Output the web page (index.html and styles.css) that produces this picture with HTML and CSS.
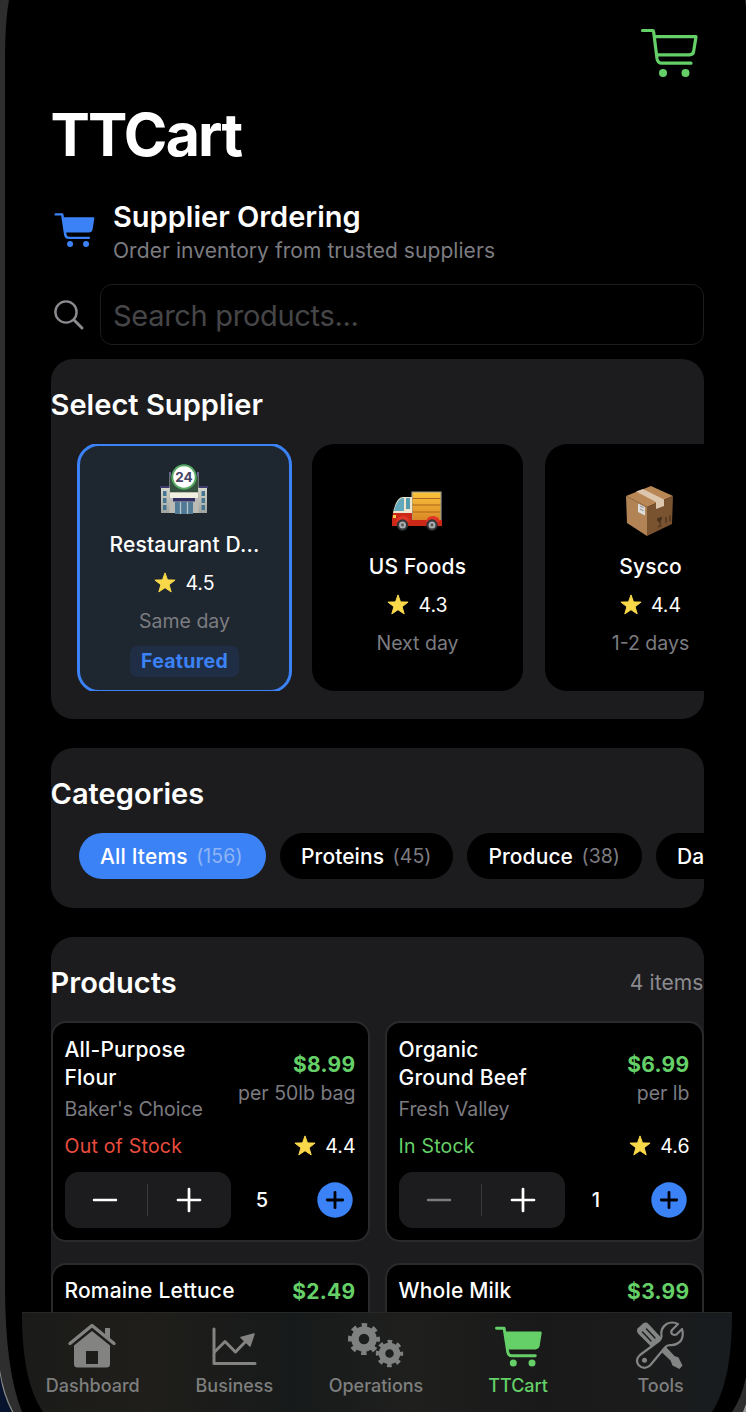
FILE: index.html
```html
<!DOCTYPE html>
<html lang="en">
<head>
<meta charset="utf-8">
<title>TTCart</title>
<link rel="stylesheet" href="styles.css">
</head>
<body>
<svg class="defs" width="0" height="0" aria-hidden="true">
  <defs>
    <symbol id="star" viewBox="0 0 22 22"><path d="M11 .9l2.500 7 7.600.2-6 4.600 2.100 7.200-6.200-4.200-6.200 4.200 2.100-7.200-6-4.600 7.600-.2z" fill="#f9d84a" stroke="#f9d84a" stroke-width="1" stroke-linejoin="round"/></symbol>
    <symbol id="cart-fill" viewBox="0 0 48 42">
      <path d="M2 3.300h7.600l3.600 23.600q.6 3.900 4.200 3.900h23.400" fill="none" stroke="currentColor" stroke-width="2.900" stroke-linecap="round" stroke-linejoin="round"/>
      <path d="M10.600 6.600H46q1.400 0 1.200 1.400l-2 12.600q-.6 3.800-4.400 3.800H13.300z" fill="currentColor"/>
      <circle cx="18.800" cy="38" r="3.500" fill="currentColor"/><circle cx="37.500" cy="38" r="3.500" fill="currentColor"/>
    </symbol>
    <symbol id="add" viewBox="0 0 36 36"><circle cx="18" cy="18" r="17.700" fill="#3b82f6"/><path d="M18 10.300v15.400M10.300 18h15.400" stroke="#000" stroke-width="2.800" stroke-linecap="round"/></symbol>
    <symbol id="minus" viewBox="0 0 26 26"><path d="M2 13h22" stroke="currentColor" stroke-width="2.500" stroke-linecap="round"/></symbol>
    <symbol id="plus" viewBox="0 0 26 26"><path d="M2 13h22M13 2v22" stroke="currentColor" stroke-width="2.700" stroke-linecap="round"/></symbol>
  </defs>
</svg>
<div class="device">
  <svg class="bezel" width="746" height="1412" viewBox="0 0 746 1412" aria-hidden="true">
    <rect width="746" height="1412" fill="#07132c"/>
    <path d="M0 0H746V1412H12Q3 1395 0 1375z" fill="#8a8a8a"/>
    <path d="M0 0H746V1412H13.500Q4 1395 0 1370z" fill="#2e2e2e"/>
    <path d="M9 0Q5 22 5 60V1285Q5 1370 22 1412H732Q742 1397 746 1377V8L745 0z" fill="#000"/>
    <path d="M746 1404l-3 8h3z" fill="#999"/>
  </svg>
  <div class="screen">
    <main class="content">
      <header class="nav">
        <svg width="60" height="52" viewBox="0 0 60 52" fill="none" stroke="#65d068" stroke-width="3.200" stroke-linecap="round" stroke-linejoin="round"><path d="M2.500 4.500H12.500q1 0 1.100 1L17 32.500q.7 4.700 4.800 4.700H51"/><path d="M15 10.700H56L53.700 25q-.5 3.800-4.200 3.800H16.500"/><circle cx="23" cy="47" r="4" fill="#65d068" stroke="none"/><circle cx="45.500" cy="47" r="4" fill="#65d068" stroke="none"/></svg>
      </header>
      <h1 class="title">TTCart</h1>
      <div class="intro">
        <svg class="intro-icon" width="41" height="37"><use href="#cart-fill"/></svg>
        <div>
          <h2 class="intro-title">Supplier Ordering</h2>
          <p class="intro-sub">Order inventory from trusted suppliers</p>
        </div>
      </div>
      <div class="search">
        <svg width="30" height="30" viewBox="0 0 30 30" fill="none" stroke="#8b8b90" stroke-linecap="round"><circle cx="12" cy="12" r="10.600" stroke-width="2.400"/><path d="M20 20l8 8" stroke-width="3"/></svg>
        <div class="field">Search products...</div>
      </div>

      <section class="panel suppliers">
        <h2 class="heading">Select Supplier</h2>
        <div class="supplier-row">
          <article class="supplier selected">
            <div class="emoji"><svg width="48" height="50" viewBox="0 0 48 50">
              <defs><linearGradient id="wall" x2="0" y2="1"><stop stop-color="#d6d8cc"/><stop offset="1" stop-color="#a0a29d"/></linearGradient></defs>
              <path d="M1 24h10v25H1zM37 24h10v25H37z" fill="url(#wall)"/><path d="M0 22h10v2H0zM38 22h10v2H38z" fill="#3c3b6b"/>
              <path d="M9.500 11h29v38h-29z" fill="#b9bbb4"/><path d="M10 11h28v17H10z" fill="#34523e"/><path d="M9 8h2v4H9zM37 8h2v4h-2z" fill="#65658f"/>
              <path d="M10 29h28v5H10z" fill="#eff0df"/><path d="M13 34h22v3.500H13z" fill="#303064"/><path d="M15 38h18v12H15z" fill="#517894"/><path d="M20.500 38v12M27.500 38v12" stroke="#b4c5cc" stroke-width="1.300"/>
              <path d="M3 27h3.500v5H3zM3 34h3.500v5H3zM3 41h3.500v5H3zM41.500 27H45v5h-3.500zM41.500 34H45v5h-3.500zM41.500 41H45v5h-3.500z" fill="#467594"/>
              <circle cx="24" cy="13" r="11.700" fill="#fff" stroke="#55aa62" stroke-width="1.900"/><text class="sign" x="24" y="18.200" text-anchor="middle">24</text>
            </svg></div>
            <h3 class="name">Restaurant D...</h3>
            <div class="rating"><svg width="22" height="22"><use href="#star"/></svg><span>4.5</span></div>
            <p class="day">Same day</p>
            <span class="badge">Featured</span>
          </article>
          <article class="supplier">
            <div class="emoji"><svg width="50" height="40" viewBox="0 0 50 40">
              <defs><linearGradient id="cargo" x2="0" y2="1"><stop stop-color="#fac43c"/><stop offset="1" stop-color="#d98525"/></linearGradient></defs>
              <path d="M20 1h29v29H20z" fill="url(#cargo)" stroke="#939b91" stroke-width="1.200"/><path d="M20.500 7.500h28M20.500 14h28M20.500 21h28" stroke="#ae6419" stroke-width="1"/>
              <path d="M1 22Q4 6 11 6h9v24H1z" fill="#eee5cc"/><path d="M2 20Q5 8 10.500 7H12v13z" fill="#61a9bb"/><path d="M14 7h4v11h-4z" fill="#559caf"/>
              <path d="M1 22h19v7h30v6H0v-8z" fill="#cc2818"/><path d="M4 31q1-6 7-6t7 6M34 31q1-6 7-6t7 6" fill="#e23424"/><path d="M1 24h3v3H1z" fill="#ffc850"/>
              <circle cx="10.500" cy="34" r="5.700" fill="#333638"/><circle cx="40" cy="34" r="5.700" fill="#333638"/><circle cx="10.500" cy="34" r="3.500" fill="#a8acae"/><circle cx="40" cy="34" r="3.500" fill="#a8acae"/><circle cx="10.500" cy="34" r="1.400" fill="#555"/><circle cx="40" cy="34" r="1.400" fill="#555"/>
            </svg></div>
            <h3 class="name">US Foods</h3>
            <div class="rating"><svg width="22" height="22"><use href="#star"/></svg><span>4.3</span></div>
            <p class="day">Next day</p>
          </article>
          <article class="supplier">
            <div class="emoji"><svg width="47" height="50" viewBox="0 0 47 50">
              <path d="M0 10L25 0l22 10-26 11z" fill="#b98656"/><path d="M0 10l21 11v29L1 37z" fill="#b18355"/><path d="M21 21l26-11-1 28-25 12z" fill="#79522f"/>
              <path d="M10 5.500l7-2.500 21 10.500v6.500l-8 3v-7z" fill="#ddc6ae"/><path d="M12 17.500l7 3.500v8.500L12 26z" fill="#ddd"/><path d="M14 20l3.500 1.700M14 23l3.500 1.700" stroke="#888"/><path d="M31 32.500l5-2q0 4-2 5-3 1-3-3z" fill="#48301c"/><path d="M34 35v4M32 41l3.500-1.500M40 31v6M44 29.500v6" stroke="#48301c" stroke-width="1.200" fill="none"/>
            </svg></div>
            <h3 class="name">Sysco</h3>
            <div class="rating"><svg width="22" height="22"><use href="#star"/></svg><span>4.4</span></div>
            <p class="day">1-2 days</p>
          </article>
        </div>
      </section>

      <section class="panel categories">
        <h2 class="heading">Categories</h2>
        <div class="pills">
          <div class="pill active"><b>All Items</b><span>(156)</span></div>
          <div class="pill"><b>Proteins</b><span>(45)</span></div>
          <div class="pill"><b>Produce</b><span>(38)</span></div>
          <div class="pill"><b>Dairy</b></div>
        </div>
      </section>

      <section class="panel products">
        <div class="products-head"><h2 class="heading">Products</h2><span class="count">4 items</span></div>
        <div class="grid">
          <article class="product">
            <div class="top"><div><h3 class="name">All-Purpose<br>Flour</h3><p class="brand">Baker's Choice</p></div><div class="cost"><strong>$8.99</strong><span>per 50lb bag</span></div></div>
            <div class="status"><span class="out">Out of Stock</span><div class="rating"><svg width="22" height="22"><use href="#star"/></svg><span>4.4</span></div></div>
            <div class="buy"><div class="stepper"><svg><use href="#minus"/></svg><i></i><svg><use href="#plus"/></svg></div><span class="qty">5</span><svg class="add"><use href="#add"/></svg></div>
          </article>
          <article class="product">
            <div class="top"><div><h3 class="name">Organic<br>Ground Beef</h3><p class="brand">Fresh Valley</p></div><div class="cost"><strong>$6.99</strong><span>per lb</span></div></div>
            <div class="status"><span class="in">In Stock</span><div class="rating"><svg width="22" height="22"><use href="#star"/></svg><span>4.6</span></div></div>
            <div class="buy"><div class="stepper"><svg class="off"><use href="#minus"/></svg><i></i><svg><use href="#plus"/></svg></div><span class="qty">1</span><svg class="add"><use href="#add"/></svg></div>
          </article>
          <article class="product">
            <div class="top short"><div><h3 class="name">Romaine Lettuce</h3></div><div class="cost"><strong>$2.49</strong></div></div>
          </article>
          <article class="product">
            <div class="top short"><div><h3 class="name">Whole Milk</h3></div><div class="cost"><strong>$3.99</strong></div></div>
          </article>
        </div>
      </section>
    </main>
    <nav class="tabs">
      <div class="tab"><svg width="50" height="46" viewBox="1 2.500 50 46" fill="#838381">
        <path d="M3 22L25 4l22 18" fill="none" stroke="#838381" stroke-width="3.400" stroke-linecap="round" stroke-linejoin="round"/><path d="M38 6.500h5V17l-5-4z"/>
        <path fill-rule="evenodd" d="M25 9.500L43 24v18.500q0 3.500-3.500 3.500H10.500q-3.500 0-3.500-3.500V24zM19 29.500v13h12V29.500z"/></svg><span>Dashboard</span></div>
      <div class="tab"><svg width="50" height="46" viewBox="0 1 50 46" fill="none" stroke="#838381" stroke-width="3" stroke-linecap="round" stroke-linejoin="round"><path d="M5 6v34.500H46"/><path d="M5.500 29l10.500-10.500 10.500 10.500L38 17"/><path d="M45 11l-13 3.500 9 8.500z" fill="#838381" stroke-width="1.500"/></svg><span>Business</span></div>
      <div class="tab"><svg width="58" height="46" viewBox="0 3 58 46" fill="none" stroke="#7f8180">
        <circle cx="17" cy="18" r="9" stroke-width="7.500"/><circle cx="17" cy="18" r="14" stroke-width="4" stroke-dasharray="5.500 5.496" stroke-dashoffset="2.750"/>
        <circle cx="42.500" cy="32.500" r="7.500" stroke-width="6.500"/><circle cx="42.500" cy="32.500" r="12" stroke-width="3.400" stroke-dasharray="4.700 4.725" stroke-dashoffset="2.350"/></svg><span>Operations</span></div>
      <div class="tab current"><svg width="48" height="46" viewBox="-.5 0 48 44"><use href="#cart-fill" width="48" height="42"/></svg><span>TTCart</span></div>
      <div class="tab"><svg width="50" height="50" viewBox="-2 .5 50 50">
        <path d="M1.500 7L7 2q3-2 5.500.5L26 17l-9.500 9.500L2 12q-2-2.500-.5-5z" fill="#838585"/><path d="M6.500 10.500l8.500 9M10.500 7.500l8.500 9" stroke="#1a1b1a" stroke-width="1.400" stroke-linecap="round"/>
        <path d="M25 30l5-4.500 8.500 9 4 1.500 4 8-3 3.500-7-3.500-2-5z" fill="#838585"/>
        <path d="M42 2.500Q36-.5 30.500 2.500 24 7 25.500 15q-.2 2-2 4L4 33.500q-5 4.500-1.500 10Q8 49 14 44L29 26q2-2.500 5-2.500 7 .5 11-4.500 3-5 1-11.500l-5.500 5.500q-3 .8-4.500-.5-1.500-2 0-4z" fill="#1a1b1a" stroke="#838585" stroke-width="2.200" stroke-linejoin="round"/><circle cx="8.500" cy="38.800" r="2.500" fill="#838585"/></svg><span>Tools</span></div>
    </nav>
  </div>
</div>
</body>
</html>
```
FILE: styles.css
```css
* { box-sizing: border-box; }
body { margin: 0; background: #000; color: #fff; font-family: Inter, "Liberation Sans", sans-serif; overflow: hidden; }
h1, h2, h3, p { margin: 0; }
svg { display: block; flex: none; overflow: visible; }
.defs { position: absolute; }
.device { position: relative; width: 746px; height: 1412px; overflow: hidden; }
.bezel { position: absolute; inset: 0; }
.screen { position: relative; height: 1412px; display: flex; flex-direction: column; padding: 0 14px 0 22px; }
.content { height: 1312px; flex: none; overflow: hidden; padding: 0 28.500px; }
.nav { height: 105px; display: flex; justify-content: flex-end; padding: 26px 4px 0 0; }
.title { font-size: 59px; line-height: 60px; font-weight: 700; letter-spacing: -1.800px; }
.intro { display: flex; height: 119px; padding: 37px 0 0 3px; gap: 18.500px; }
.intro-icon { margin-top: 9px; color: #3b82f6; }
.intro-title { font-size: 29px; line-height: 30px; font-weight: 600; }
.intro-sub { font-size: 21px; line-height: 28px; margin-top: 5px; color: #7c7c80; letter-spacing: .06px; }
.search { display: flex; align-items: center; gap: 16.500px; padding-left: 3px; height: 60px; }
.search svg { margin-top: 1px; }
.field { flex: 1; height: 61px; border: 1.500px solid #1c1c1e; border-radius: 12px; padding-left: 12px; font-size: 29px; line-height: 61px; letter-spacing: -.3px; color: #464648; white-space: nowrap; }
.panel { background: #1c1c1e; border-radius: 22px; overflow: hidden; }
.heading { font-size: 29px; line-height: 36px; font-weight: 600; letter-spacing: .04px; white-space: nowrap; }
.suppliers { margin-top: 15px; height: 360px; padding-top: 28px; }
.supplier-row { display: flex; gap: 22px; margin-top: 21px; padding-left: 28px; height: 247px; overflow: hidden; }
.supplier { width: 211px; flex: none; border-radius: 22px; background: #000; display: flex; flex-direction: column; align-items: center; justify-content: center; gap: 12px; height: 247px; padding-left: 1px; }
.supplier.selected { width: 215px; height: 250px; margin: -1.500px -2px; border: 3px solid #3b82f6; background: #1e2630; }
.supplier .name { margin: 1px 0 -1px; }
.emoji { height: 60px; display: flex; align-items: center; padding: 2px 1.500px 0 0; }
.sign { font-size: 13.500px; font-weight: 700; fill: #454565; }
.name { font-size: 21px; line-height: 28px; font-weight: 500; white-space: nowrap; letter-spacing: .18px; }
.rating { display: flex; align-items: center; gap: 9px; height: 26px; font-size: 19.500px; }
.day { font-size: 19.500px; line-height: 26px; color: #7c7c80; }
.badge { height: 31px; padding: 0 11px; border-radius: 7px; background: #1f2d45; color: #3b82f6; font-size: 19.500px; line-height: 31px; font-weight: 700; letter-spacing: .3px; }
.categories { margin-top: 29px; height: 160px; padding-top: 28px; }
.pills { display: flex; gap: 14px; margin-top: 21px; padding-left: 28px; }
.pill { height: 46px; flex: none; display: flex; align-items: center; gap: 8.500px; padding: 0 21.500px 0 21.500px; border-radius: 23px; background: #000; white-space: nowrap; }
.pill b { font-size: 21px; font-weight: 500; letter-spacing: .08px; }
.pill span { font-size: 19.500px; letter-spacing: .05px; color: #7c7c80; }
.pill.active { background: #3b82f6; padding-right: 23px; }
.pill.active b { letter-spacing: .15px; }
.pill.active span { color: #8fb5f4; }
.products { margin-top: 29px; height: 500px; padding-top: 28px; }
.products-head { display: flex; justify-content: space-between; align-items: center; height: 36px; }
.count { font-size: 21px; line-height: 34px; letter-spacing: .1px; margin-bottom: 1px; color: #8b8b90; }
.grid { display: grid; grid-template-columns: 319px 319px; gap: 21px 15px; margin-top: 20px; }
.product { height: 221px; border: 2px solid #2a2a2c; border-radius: 15px; background: #000; padding: 11px 12px 0; }
.top { display: flex; justify-content: space-between; align-items: center; height: 89px; }
.top.short { height: 30px; }
.brand { font-size: 19.500px; line-height: 26px; margin-top: 4px; color: #7c7c80; white-space: nowrap; letter-spacing: -.05px; }
.cost { display: flex; flex-direction: column; align-items: flex-end; white-space: nowrap; }
.short .cost { padding-top: 1px; }
.cost strong { font-size: 21px; line-height: 28px; font-weight: 700; letter-spacing: .3px; color: #65d068; }
.cost span { font-size: 19.500px; line-height: 28px; color: #7c7c80; }
.status { display: flex; justify-content: space-between; align-items: center; height: 26px; margin-top: 10px; font-size: 19.500px; }
.out, .in { letter-spacing: .22px; }
.out { color: #ea4d3d; }
.in { color: #65d068; }
.buy { display: flex; align-items: center; height: 56px; margin-top: 13px; }
.stepper { width: 166px; height: 56px; display: flex; align-items: center; justify-content: center; border-radius: 14px; background: #1c1c1e; }
.stepper svg { width: 26px; height: 26px; margin: 0 28.500px 0 27.500px; }
.stepper i { width: 1.500px; height: 32px; background: #3b3b3e; }
.stepper .off { color: #7c7c80; }
.qty { width: 63px; text-align: center; font-size: 20px; font-weight: 500; }
.add { width: 36px; height: 36px; margin-left: auto; margin-right: 2.500px; }
.tabs { height: 100px; flex: none; display: flex; padding-right: 2px; border-top: 1px solid #272725; background: linear-gradient(90deg, #1b1b19, #1f1e1b 18%, #171a1a 38%, #1f201e 55%, #181918 73%, #1b1b1b 86%, #181c1f); clip-path: path("M0 0H710C710 45 704 78 690 100H21C6 78 0 45 0 0z"); }
.tab { flex: 1; display: flex; flex-direction: column; align-items: center; padding-top: 9px; color: #7e7f7e; font-size: 18px; line-height: 24px; font-weight: 500; }
.tab svg { height: 50px; }
.tab span { margin-top: 2px; }
.tab.current { color: #65d068; }
.tab.current span { margin-left: 1px; }
.tab:last-child span { margin-left: 3px; }
```
